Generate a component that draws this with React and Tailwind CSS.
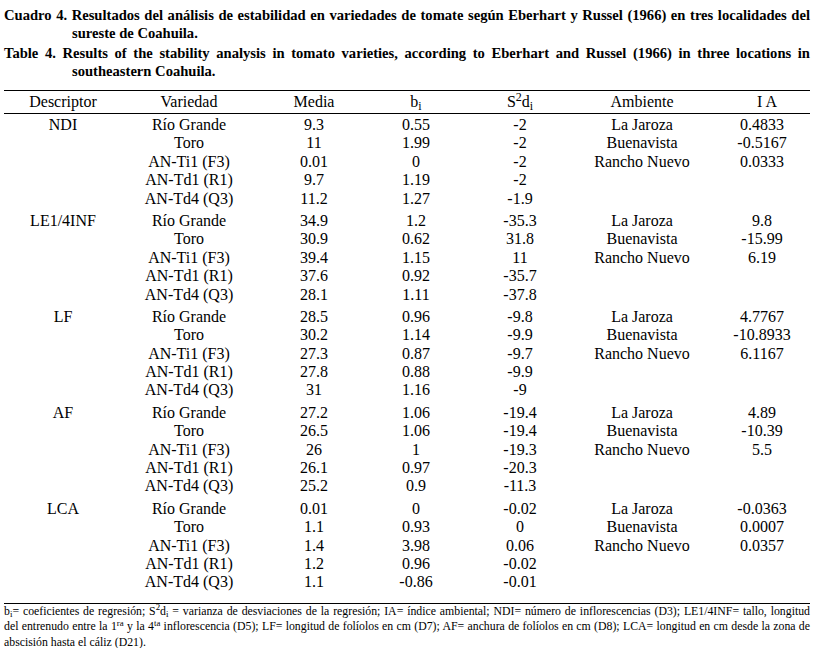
import React from "react";

const groups = [
  {
    d: "NDI",
    rows: [
      ["Río Grande", "9.3", "0.55", "-2", "La Jaroza", "0.4833"],
      ["Toro", "11", "1.99", "-2", "Buenavista", "-0.5167"],
      ["AN-Ti1 (F3)", "0.01", "0", "-2", "Rancho Nuevo", "0.0333"],
      ["AN-Td1 (R1)", "9.7", "1.19", "-2", "", ""],
      ["AN-Td4 (Q3)", "11.2", "1.27", "-1.9", "", ""],
    ],
  },
  {
    d: "LE1/4INF",
    rows: [
      ["Río Grande", "34.9", "1.2", "-35.3", "La Jaroza", "9.8"],
      ["Toro", "30.9", "0.62", "31.8", "Buenavista", "-15.99"],
      ["AN-Ti1 (F3)", "39.4", "1.15", "11", "Rancho Nuevo", "6.19"],
      ["AN-Td1 (R1)", "37.6", "0.92", "-35.7", "", ""],
      ["AN-Td4 (Q3)", "28.1", "1.11", "-37.8", "", ""],
    ],
  },
  {
    d: "LF",
    rows: [
      ["Río Grande", "28.5", "0.96", "-9.8", "La Jaroza", "4.7767"],
      ["Toro", "30.2", "1.14", "-9.9", "Buenavista", "-10.8933"],
      ["AN-Ti1 (F3)", "27.3", "0.87", "-9.7", "Rancho Nuevo", "6.1167"],
      ["AN-Td1 (R1)", "27.8", "0.88", "-9.9", "", ""],
      ["AN-Td4 (Q3)", "31", "1.16", "-9", "", ""],
    ],
  },
  {
    d: "AF",
    rows: [
      ["Río Grande", "27.2", "1.06", "-19.4", "La Jaroza", "4.89"],
      ["Toro", "26.5", "1.06", "-19.4", "Buenavista", "-10.39"],
      ["AN-Ti1 (F3)", "26", "1", "-19.3", "Rancho Nuevo", "5.5"],
      ["AN-Td1 (R1)", "26.1", "0.97", "-20.3", "", ""],
      ["AN-Td4 (Q3)", "25.2", "0.9", "-11.3", "", ""],
    ],
  },
  {
    d: "LCA",
    rows: [
      ["Río Grande", "0.01", "0", "-0.02", "La Jaroza", "-0.0363"],
      ["Toro", "1.1", "0.93", "0", "Buenavista", "0.0007"],
      ["AN-Ti1 (F3)", "1.4", "3.98", "0.06", "Rancho Nuevo", "0.0357"],
      ["AN-Td1 (R1)", "1.2", "0.96", "-0.02", "", ""],
      ["AN-Td4 (Q3)", "1.1", "-0.86", "-0.01", "", ""],
    ],
  },
];

const cols = "grid grid-cols-[118px_134px_116px_88px_120px_124px_106px]";
const justLine = "text-justify [text-align-last:justify] whitespace-nowrap";

export default function App() {
  return (
    <div className="w-[814px] h-[648px] bg-white text-black overflow-hidden font-['Liberation_Serif','Times_New_Roman',serif]">
      <div className="pl-[4px] pr-[4px] pt-[6px]">
        <div className="font-bold text-[14.6px] leading-[18px]">
          <div className={justLine}>
            Cuadro 4. Resultados del análisis de estabilidad en variedades de tomate según Eberhart y Russel (1966) en tres localidades del
          </div>
          <div className="pl-[68px]">sureste de Coahuila.</div>
        </div>
        <div className="mt-[2px] font-bold text-[14.6px] leading-[18px]">
          <div className={justLine}>
            Table 4. Results of the stability analysis in tomato varieties, according to Eberhart and Russel (1966) in three locations in
          </div>
          <div className="pl-[68px]">southeastern Coahuila.</div>
        </div>

        <div className="mt-[10px] border-t border-b border-black">
          <div className={`${cols} h-[22px] items-center text-[16px] leading-[18px] text-center`}>
            <div>Descriptor</div>
            <div>Variedad</div>
            <div>Media</div>
            <div>
              b<sub>i</sub>
            </div>
            <div>
              S<sup>2</sup>d<sub>i</sub>
            </div>
            <div>Ambiente</div>
            <div className="pl-[20px]">I A</div>
          </div>
        </div>

        <div className="pt-[2px] pb-[7px] border-b border-black text-[16px] leading-[18.4px] text-center">
          {groups.map((g) => (
            <div key={g.d} className="pb-[4px]">
              {g.rows.map((r, i) => (
                <div key={i} className={`${cols} h-[18.4px]`}>
                  <div>{i === 0 ? g.d : ""}</div>
                  <div>{r[0]}</div>
                  <div>{r[1]}</div>
                  <div>{r[2]}</div>
                  <div>{r[3]}</div>
                  <div>{r[4]}</div>
                  <div className="pl-[10px]">{r[5]}</div>
                </div>
              ))}
            </div>
          ))}
        </div>

        <div className="text-[11.8px] leading-[15.5px]">
          <div className={justLine}>
            b<sub>i</sub>= coeficientes de regresión; S<sup>2</sup>d<sub>i</sub> = varianza de desviaciones de la regresión; IA= índice ambiental; NDI= número de inflorescencias (D3); LE1/4INF= tallo, longitud
          </div>
          <div className={justLine}>
            del entrenudo entre la 1<sup>ra</sup> y la 4<sup>ta</sup> inflorescencia (D5); LF= longitud de folíolos en cm (D7); AF= anchura de folíolos en cm (D8); LCA= longitud en cm desde la zona de
          </div>
          <div>abscisión hasta el cáliz (D21).</div>
        </div>
      </div>
    </div>
  );
}
